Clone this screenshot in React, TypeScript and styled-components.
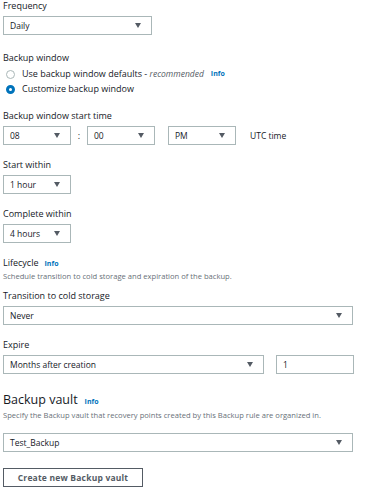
import React from 'react';
import styled, { createGlobalStyle } from 'styled-components';

const GlobalStyle = createGlobalStyle`
  body {
    margin: 0;
    background: #ffffff;
    font-family: "Open Sans", "DejaVu Sans", sans-serif;
    color: #16191f;
  }
`;

const Page = styled.div`
  padding: 0 13px 0 3px;
  width: 350px;
`;

const Field = styled.div<{ $gap?: number }>`
  margin-bottom: ${(p) => p.$gap ?? 12}px;
`;

const Label = styled.div`
  font-size: 9px;
  line-height: 12px;
  color: #16191f;
  margin-bottom: 4px;
`;

const Heading = styled.div`
  font-size: 12.5px;
  line-height: 16px;
  color: #16191f;
  display: flex;
  align-items: baseline;
  gap: 7px;
`;

const Info = styled.span`
  font-size: 7px;
  font-weight: 700;
  color: #0073bb;
`;

const LabelRow = styled.div`
  font-size: 9px;
  line-height: 12px;
  display: flex;
  align-items: baseline;
  gap: 6px;
  margin-bottom: 1px;
`;

const Description = styled.div<{ $gap: number }>`
  font-size: 7.6px;
  line-height: 11px;
  color: #687078;
  margin-bottom: ${(p) => p.$gap}px;
`;

const SelectBox = styled.div<{ $width?: string }>`
  box-sizing: border-box;
  width: ${(p) => p.$width ?? '100%'};
  height: 19px;
  border: 1px solid #aab7b8;
  display: flex;
  align-items: center;
  justify-content: space-between;
  padding: 0 10px 0 6px;
  font-size: 8.5px;
  color: #16191f;
  background: #fff;
  flex-shrink: 0;
`;

const Arrow = styled.span`
  width: 0;
  height: 0;
  border-left: 3.5px solid transparent;
  border-right: 3.5px solid transparent;
  border-top: 5px solid #545b64;
`;

const Row = styled.div`
  display: flex;
  align-items: center;
`;

const Colon = styled.span`
  width: 16px;
  text-align: center;
  font-size: 9px;
`;

const Spacer = styled.span<{ $w: number }>`
  width: ${(p) => p.$w}px;
  flex-shrink: 0;
`;

const Utc = styled.span`
  font-size: 8.5px;
  color: #16191f;
`;

const RadioList = styled.div`
  display: flex;
  flex-direction: column;
  gap: 3px;
`;

const RadioRow = styled.div`
  display: flex;
  align-items: center;
  gap: 7px;
  font-size: 9px;
  line-height: 12px;
`;

const Radio = styled.span<{ $checked?: boolean }>`
  box-sizing: border-box;
  width: 9px;
  height: 9px;
  border-radius: 50%;
  margin-left: 3px;
  border: ${(p) => (p.$checked ? '3px solid #0073bb' : '1px solid #aab7b8')};
  background: #fff;
`;

const Recommended = styled.em`
  color: #545b64;
  font-size: 8.5px;
`;

const Button = styled.button`
  box-sizing: border-box;
  height: 19px;
  width: 140px;
  border: 1px solid #545b64;
  background: #fff;
  font-family: inherit;
  font-size: 8.5px;
  font-weight: 700;
  color: #545b64;
  letter-spacing: 0.2px;
  padding: 0;
`;

const Select = ({ value, width }: { value: string; width?: string }) => (
  <SelectBox $width={width}>
    <span>{value}</span>
    <Arrow />
  </SelectBox>
);

export default function App() {
  return (
    <Page>
      <GlobalStyle />
      <Field $gap={17}>
        <Label>Frequency</Label>
        <Select value="Daily" width="149px" />
      </Field>

      <Field $gap={15}>
        <Label>Backup window</Label>
        <RadioList>
          <RadioRow>
            <Radio />
            <span>
              Use backup window defaults - <Recommended>recommended</Recommended>
            </span>
            <Info>Info</Info>
          </RadioRow>
          <RadioRow>
            <Radio $checked />
            <span>Customize backup window</span>
          </RadioRow>
        </RadioList>
      </Field>

      <Field $gap={14}>
        <Label>Backup window start time</Label>
        <Row>
          <Select value="08" width="68px" />
          <Colon>:</Colon>
          <Select value="00" width="68px" />
          <Spacer $w={13} />
          <Select value="PM" width="68px" />
          <Spacer $w={14} />
          <Utc>UTC time</Utc>
        </Row>
      </Field>

      <Field $gap={14}>
        <Label>Start within</Label>
        <Select value="1 hour" width="68px" />
      </Field>

      <Field $gap={14}>
        <Label>Complete within</Label>
        <Select value="4 hours" width="68px" />
      </Field>

      <Field $gap={0}>
        <LabelRow>
          <span>Lifecycle</span>
          <Info>Info</Info>
        </LabelRow>
        <Description $gap={8}>
          Schedule transition to cold storage and expiration of the backup.
        </Description>
      </Field>

      <Field $gap={14}>
        <Label>Transition to cold storage</Label>
        <Select value="Never" />
      </Field>

      <Field $gap={18}>
        <Label>Expire</Label>
        <Row>
          <Select value="Months after creation" width="261px" />
          <Spacer $w={12} />
          <SelectBox $width="78px">
            <span>1</span>
          </SelectBox>
        </Row>
      </Field>

      <Field $gap={0}>
        <Heading>
          <span>Backup vault</span>
          <Info>Info</Info>
        </Heading>
        <Description $gap={12}>
          Specify the Backup vault that recovery points created by this Backup rule are organized in.
        </Description>
      </Field>

      <Field $gap={12}>
        <Select value="Test_Backup" />
      </Field>

      <Button>Create new Backup vault</Button>
    </Page>
  );
}
